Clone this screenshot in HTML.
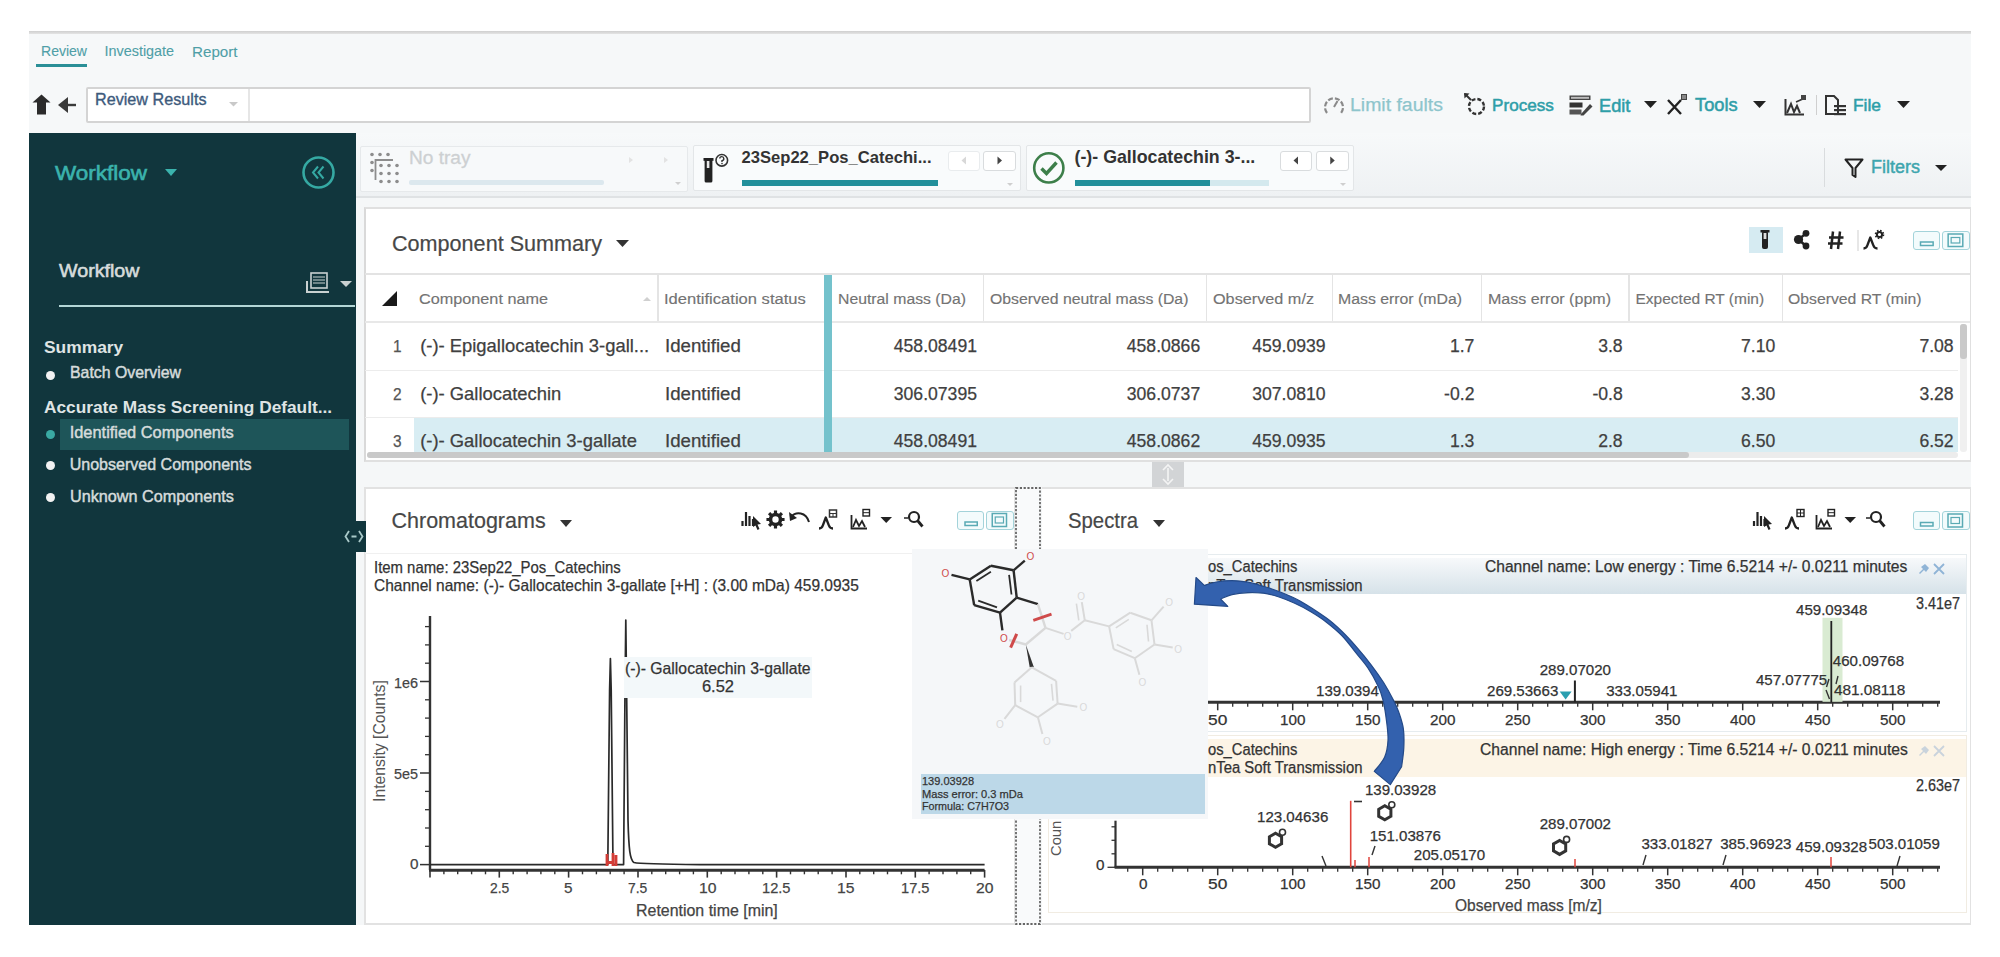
<!DOCTYPE html><html><head><meta charset="utf-8"><style>
html,body{margin:0;padding:0;}
body{width:2000px;height:957px;position:relative;overflow:hidden;background:#fff;font-family:"Liberation Sans",sans-serif;}
.a{position:absolute;box-sizing:border-box;}
.t{position:absolute;white-space:nowrap;line-height:1;transform-origin:0 0;}
svg{position:absolute;overflow:visible;}
</style></head><body>
<div class="a" style="left:29px;top:31px;width:1942px;height:894px;background:#f6f8f9;"></div>
<div class="a" style="left:29px;top:31px;width:1942px;height:3px;background:linear-gradient(#cfcfcf,#e4e4e4);"></div>
<div class="t" style="left:40.5px;top:44.4px;font-size:14.1px;color:#4f9fa7;transform:scaleX(0.9950);-webkit-text-stroke:0.1px #4f9fa7;">Review</div>
<div class="a" style="left:36px;top:64px;width:51px;height:3px;background:#2a8f97;"></div>
<div class="t" style="left:104.5px;top:44.1px;font-size:14.4px;color:#4f9fa7;-webkit-text-stroke:0.1px #4f9fa7;">Investigate</div>
<div class="t" style="left:191.8px;top:43.6px;font-size:15px;color:#4f9fa7;transform:scaleX(1.0107);-webkit-text-stroke:0.1px #4f9fa7;">Report</div>
<svg style="left:30px;top:92px" width="50" height="26" viewBox="0 0 50 26"><path d="M2.5 10.5 L11.5 2.5 L20.5 10.5 L16 10.5 L16 22.5 L7 22.5 L7 10.5 Z" fill="#2b2b2b"/><path d="M28 13 L38 5 L38 21 Z" fill="#3a3a3a"/><rect x="36" y="11.8" width="10" height="2.4" fill="#3a3a3a"/></svg>
<div class="a" style="left:86px;top:87px;width:1225px;height:36px;background:#fff;border:2px solid #d4d4d4;border-radius:2px;"></div>
<div class="a" style="left:248px;top:89px;width:1.5px;height:32px;background:#e6e6e6;"></div>
<div class="t" style="left:95.0px;top:90.9px;font-size:16.3px;color:#3d5a7c;transform:scaleX(0.9936);-webkit-text-stroke:0.35px #3d5a7c;">Review Results</div>
<svg style="left:229px;top:102px" width="10" height="5"><path d="M0 0 L9 0 L4.5 4.5Z" fill="#c9c9c9"/></svg>
<svg style="left:1323px;top:96px" width="22" height="19" viewBox="0 0 22 19"><path d="M4 17 A9 9 0 1 1 18 17" fill="none" stroke="#8a8a8a" stroke-width="2.2" stroke-dasharray="5 2"/><path d="M11 11 L14.5 5" stroke="#8a8a8a" stroke-width="2"/></svg>
<div class="t" style="left:1350.0px;top:96.1px;font-size:18.8px;color:#8ec5cc;transform:scaleX(1.0351);-webkit-text-stroke:0.25px #8ec5cc;">Limit faults</div>
<svg style="left:1463px;top:92px" width="24" height="25" viewBox="0 0 24 25"><circle cx="13.5" cy="14.5" r="7.5" fill="none" stroke="#333" stroke-width="2.4" stroke-dasharray="4 2"/><path d="M2 2 L8 8" stroke="#333" stroke-width="2"/><path d="M1 1 L6.5 1.5 L1.5 6.5Z" fill="#333"/></svg>
<div class="t" style="left:1492.0px;top:98.3px;font-size:16.8px;color:#2e9ea8;transform:scaleX(1.0217);-webkit-text-stroke:0.5px #2e9ea8;">Process</div>
<svg style="left:1569px;top:95px" width="24" height="21" viewBox="0 0 24 21"><rect x="0.5" y="0.5" width="21" height="4.5" fill="#444"/><rect x="2" y="1.8" width="18" height="2" fill="#bbb"/><rect x="0.5" y="7.5" width="13" height="5" fill="#333"/><rect x="0.5" y="14.5" width="12" height="5" fill="#555"/><path d="M12 19 L21 9 L23.5 11.5 L14.5 20.5 L11.5 20.5Z" fill="#444"/></svg>
<div class="t" style="left:1598.6px;top:97.7px;font-size:17.5px;color:#2e9ea8;transform:scaleX(1.0413);-webkit-text-stroke:0.5px #2e9ea8;">Edit</div>
<svg style="left:1644px;top:101px" width="14" height="8"><path d="M0 0 L13 0 L6.5 7Z" fill="#222"/></svg>
<svg style="left:1666px;top:94px" width="22" height="22" viewBox="0 0 22 22"><path d="M2 6 L15 20 M15 6 L2 20" stroke="#222" stroke-width="2.4"/><rect x="15" y="0" width="6" height="6" fill="#444"/><rect x="16" y="1.5" width="4" height="1" fill="#ccc"/><rect x="16" y="3.5" width="4" height="1" fill="#ccc"/></svg>
<div class="t" style="left:1694.8px;top:97.4px;font-size:17.8px;color:#2e9ea8;transform:scaleX(1.0276);-webkit-text-stroke:0.5px #2e9ea8;">Tools</div>
<svg style="left:1753px;top:101px" width="14" height="8"><path d="M0 0 L13 0 L6.5 7Z" fill="#222"/></svg>
<svg style="left:1784px;top:95px" width="24" height="21" viewBox="0 0 24 21"><path d="M1.5 4 L1.5 19.5 L20 19.5" fill="none" stroke="#333" stroke-width="2"/><path d="M3 18 L7 9 L10 17 L13 11 L16 18" fill="none" stroke="#333" stroke-width="2"/><path d="M12 7 L21 3" stroke="#333" stroke-width="1.6"/><rect x="17" y="0" width="5" height="5" fill="#444"/></svg>
<div class="a" style="left:1815.5px;top:95px;width:1.5px;height:20px;background:#cfcfcf;"></div>
<svg style="left:1825px;top:95px" width="22" height="21" viewBox="0 0 22 21"><path d="M1 1 L9 1 L13 5 L13 19 L1 19 Z" fill="none" stroke="#333" stroke-width="2"/><rect x="9" y="10" width="12" height="2.2" fill="#333"/><rect x="9" y="14" width="12" height="2.2" fill="#333"/><rect x="9" y="18" width="12" height="2.2" fill="#333"/></svg>
<div class="t" style="left:1853.0px;top:98.3px;font-size:16.8px;color:#2e9ea8;transform:scaleX(1.0344);-webkit-text-stroke:0.5px #2e9ea8;">File</div>
<svg style="left:1897px;top:101px" width="14" height="8"><path d="M0 0 L13 0 L6.5 7Z" fill="#222"/></svg>
<div class="a" style="left:29px;top:132.5px;width:327px;height:792.5px;background:#11363d;"></div>
<div class="t" style="left:55.0px;top:162.9px;font-size:20.5px;color:#3bb3ad;transform:scaleX(1.0964);-webkit-text-stroke:0.6px #3bb3ad;">Workflow</div>
<svg style="left:165px;top:169px" width="13" height="8"><path d="M0 0 L12 0 L6 7Z" fill="#3bb3ad"/></svg>
<svg style="left:301px;top:155px" width="36" height="36" viewBox="0 0 36 36"><circle cx="17.5" cy="17.5" r="15" fill="none" stroke="#35a9a3" stroke-width="2.6"/><path d="M17 11.5 L12 17.5 L17 23.5 M22.5 11.5 L17.5 17.5 L22.5 23.5" fill="none" stroke="#35a9a3" stroke-width="2"/></svg>
<div class="t" style="left:59.0px;top:262.5px;font-size:17.9px;color:#d6dcdc;transform:scaleX(1.0987);-webkit-text-stroke:0.55px #d6dcdc;">Workflow</div>
<svg style="left:305px;top:271px" width="50" height="26" viewBox="0 0 50 26"><rect x="6" y="2" width="16" height="15" fill="none" stroke="#c9d1d1" stroke-width="1.6"/><path d="M8 6 H20 M8 9 H20 M8 12 H20" stroke="#c9d1d1" stroke-width="1.2"/><path d="M2 10 V21 H24" fill="none" stroke="#c9d1d1" stroke-width="2"/><path d="M35 10 L47 10 L41 16Z" fill="#c9d1d1"/></svg>
<div class="a" style="left:59px;top:305px;width:296px;height:2px;background:#b3d6d6;"></div>
<div class="t" style="left:44.0px;top:338.9px;font-size:17.4px;color:#dfe4e4;font-weight:bold;">Summary</div>
<div class="a" style="left:46px;top:371px;width:9px;height:9px;border-radius:50%;background:#f2f2f2;"></div>
<div class="t" style="left:69.7px;top:364.9px;font-size:15.9px;color:#d6dcdc;transform:scaleX(0.9970);-webkit-text-stroke:0.45px #d6dcdc;">Batch Overview</div>
<div class="t" style="left:44.0px;top:398.7px;font-size:17.3px;color:#dfe4e4;font-weight:bold;">Accurate Mass Screening Default...</div>
<div class="a" style="left:60px;top:419px;width:289px;height:31px;background:#1e5559;"></div>
<div class="a" style="left:46px;top:430px;width:9px;height:9px;border-radius:50%;background:#3aa9a3;"></div>
<div class="t" style="left:69.7px;top:424.1px;font-size:16.4px;color:#d6dcdc;-webkit-text-stroke:0.45px #d6dcdc;">Identified Components</div>
<div class="a" style="left:46px;top:461px;width:9px;height:9px;border-radius:50%;background:#f2f2f2;"></div>
<div class="t" style="left:69.7px;top:455.8px;font-size:16.05px;color:#d6dcdc;-webkit-text-stroke:0.45px #d6dcdc;">Unobserved Components</div>
<div class="a" style="left:46px;top:493px;width:9px;height:9px;border-radius:50%;background:#f2f2f2;"></div>
<div class="t" style="left:69.7px;top:487.7px;font-size:16.4px;color:#d6dcdc;transform:scaleX(0.9885);-webkit-text-stroke:0.45px #d6dcdc;">Unknown Components</div>
<div class="a" style="left:340px;top:521px;width:26px;height:31px;background:#11363d;"></div>
<svg style="left:344px;top:528px" width="20" height="16" viewBox="0 0 20 16"><path d="M5 3 L1.5 8 L5 13 M15 3 L18.5 8 L15 13 M7 8 H13" fill="none" stroke="#9fc4c4" stroke-width="1.8"/></svg>
<div class="a" style="left:356px;top:132.5px;width:1615px;height:64.5px;background:linear-gradient(#f7f9fa,#eef1f3);"></div>
<div class="a" style="left:356px;top:196px;width:1615px;height:2px;background:#dfe2e4;"></div>
<div class="a" style="left:356px;top:198px;width:1615px;height:727px;background:#f5f7f8;"></div>
<div class="a" style="left:360px;top:145.5px;width:327.5px;height:46.0px;background:#f7f9fa;border:1.5px solid #e6e9eb;border-radius:2px;"></div>
<svg style="left:0;top:0" width="1" height="1"><circle cx="372" cy="154.5" r="1.8" fill="#8d8d8d"/><circle cx="380" cy="154.5" r="1.8" fill="#8d8d8d"/><circle cx="388" cy="154.5" r="1.8" fill="#8d8d8d"/><circle cx="372" cy="162.5" r="1.8" fill="#8d8d8d"/><circle cx="372" cy="170.5" r="1.8" fill="#8d8d8d"/><circle cx="381" cy="165.5" r="1.8" fill="#8d8d8d"/><circle cx="389" cy="165.5" r="1.8" fill="#8d8d8d"/><circle cx="397" cy="165.5" r="1.8" fill="#8d8d8d"/><circle cx="381" cy="173.5" r="1.8" fill="#8d8d8d"/><circle cx="389" cy="173.5" r="1.8" fill="#8d8d8d"/><circle cx="397" cy="173.5" r="1.8" fill="#8d8d8d"/><circle cx="381" cy="181.5" r="1.8" fill="#8d8d8d"/><circle cx="389" cy="181.5" r="1.8" fill="#8d8d8d"/><circle cx="397" cy="181.5" r="1.8" fill="#8d8d8d"/><path d="M375.5 180 V160 H393" fill="none" stroke="#8d8d8d" stroke-width="1.8"/></svg>
<div class="t" style="left:409.0px;top:147.7px;font-size:19.2px;color:#cdd0d2;transform:scaleX(0.9938);-webkit-text-stroke:0.3px #cdd0d2;">No tray</div>
<div class="a" style="left:409px;top:180px;width:194.5px;height:5px;background:#dce8ee;border-radius:2px;"></div>
<svg style="left:0;top:0" width="1" height="1"><path d="M629 157 L633 160 L629 163Z M664 157 L668 160 L664 163Z" fill="#e3e3e3"/><path d="M675 182 L681 182 L678 185Z" fill="#cfcfcf"/></svg>
<div class="a" style="left:693px;top:145px;width:327.5px;height:46px;background:#f9fbfc;border:1.5px solid #e3e6e8;border-radius:2px;"></div>
<svg style="left:0;top:0" width="1" height="1"><rect x="703.5" y="158" width="10" height="2.8" fill="#222"/><rect x="704.6" y="159" width="7.8" height="23.6" rx="1.5" fill="#222"/><rect x="706.8" y="161" width="2.6" height="7" fill="#e8e8e8"/><circle cx="721.8" cy="160.3" r="5.8" fill="none" stroke="#333" stroke-width="1.6"/><path d="M719.8 158.6 A2 2 0 1 1 722 160.6 V162" fill="none" stroke="#333" stroke-width="1.4"/><circle cx="722" cy="163.6" r="0.8" fill="#333"/></svg>
<div class="t" style="left:741.5px;top:149.9px;font-size:16.6px;color:#333;font-weight:bold;">23Sep22_Pos_Catechi...</div>
<div class="a" style="left:741.5px;top:180px;width:196.0px;height:5.5px;background:#23909b;"></div>
<div class="a" style="left:948px;top:150.5px;width:32px;height:20.0px;background:#fff;border:1.5px solid #e9ecee;border-radius:3px;"></div>
<svg style="left:0;top:0" width="1" height="1"><path d="M966.0 156.5 L961.5 160.5 L966.0 164.5Z" fill="#d8d8d8"/></svg>
<div class="a" style="left:983px;top:150.5px;width:33px;height:20.0px;background:#fff;border:1.5px solid #d9dcde;border-radius:3px;"></div>
<svg style="left:0;top:0" width="1" height="1"><path d="M997.5 156.5 L1002.0 160.5 L997.5 164.5Z" fill="#444"/></svg>
<svg style="left:0;top:0" width="1" height="1"><path d="M1007 183 L1013 183 L1010 186Z" fill="#cfcfcf"/></svg>
<div class="a" style="left:1026px;top:145px;width:328px;height:46px;background:#f9fbfc;border:1.5px solid #e3e6e8;border-radius:2px;"></div>
<svg style="left:1032px;top:151px" width="34" height="34" viewBox="0 0 34 34"><circle cx="16.8" cy="16.9" r="14.6" fill="none" stroke="#3d7f4a" stroke-width="2.6"/><path d="M9.5 17.5 L14.5 22.5 L24.5 11.5" fill="none" stroke="#3d7f4a" stroke-width="3.4"/></svg>
<div class="t" style="left:1074.5px;top:148.7px;font-size:17.8px;color:#333;font-weight:bold;">(-)- Gallocatechin 3-...</div>
<div class="a" style="left:1074.5px;top:180px;width:194.5px;height:5.5px;background:#d4e9ee;"></div>
<div class="a" style="left:1074.5px;top:180px;width:135.5px;height:5.5px;background:#23909b;"></div>
<div class="a" style="left:1280px;top:150.5px;width:32px;height:20.0px;background:#fff;border:1.5px solid #d9dcde;border-radius:3px;"></div>
<svg style="left:0;top:0" width="1" height="1"><path d="M1298.0 156.5 L1293.5 160.5 L1298.0 164.5Z" fill="#444"/></svg>
<div class="a" style="left:1316px;top:150.5px;width:32.5px;height:20.0px;background:#fff;border:1.5px solid #d9dcde;border-radius:3px;"></div>
<svg style="left:0;top:0" width="1" height="1"><path d="M1330.25 156.5 L1334.75 160.5 L1330.25 164.5Z" fill="#444"/></svg>
<svg style="left:0;top:0" width="1" height="1"><path d="M1340 183 L1346 183 L1343 186Z" fill="#cfcfcf"/></svg>
<div class="a" style="left:1823.5px;top:147.5px;width:1.5px;height:39.5px;background:#d9dcde;"></div>
<svg style="left:1844px;top:158px" width="21" height="21" viewBox="0 0 21 21"><path d="M1.5 1.5 H18.5 L11.5 10 V19 L8.5 17 V10 Z" fill="none" stroke="#222" stroke-width="2" stroke-linejoin="round"/></svg>
<div class="t" style="left:1871.0px;top:158.1px;font-size:18px;color:#3ea5ae;-webkit-text-stroke:0.45px #3ea5ae;">Filters</div>
<svg style="left:1934.5px;top:165px" width="13" height="7"><path d="M0 0 L12 0 L6.0 6Z" fill="#222"/></svg>
<div class="a" style="left:364px;top:207px;width:1607px;height:255px;background:#fff;border:2px solid #e0e0e0;border-left:2.5px solid #d9d9d9;border-right:1px solid #e0e0e0;"></div>
<div class="t" style="left:392.0px;top:232.5px;font-size:21.6px;color:#474747;-webkit-text-stroke:0.2px #474747;">Component Summary</div>
<svg style="left:616px;top:239.5px" width="14" height="8"><path d="M0 0 L13 0 L6.5 7Z" fill="#333"/></svg>
<div class="a" style="left:1749px;top:226.5px;width:34px;height:26.0px;background:#d6ebf2;"></div>
<svg style="left:0;top:0" width="1" height="1"><rect x="1760.5" y="230" width="9" height="2.5" fill="#222"/><rect x="1762" y="231" width="6" height="18" rx="2" fill="#222"/><rect x="1763.6" y="233" width="2.8" height="6" fill="#ddd"/><circle cx="1798.5" cy="239.5" r="4.6" fill="#222"/><circle cx="1806" cy="233.3" r="3.4" fill="#222"/><circle cx="1806" cy="246" r="3.4" fill="#222"/><path d="M1798.5 239.5 L1806 233.3 M1798.5 239.5 L1806 246" stroke="#222" stroke-width="2.4"/><path d="M1833 231.5 L1831 249 M1840 231.5 L1838 249 M1829 237.5 H1843.5 M1828 243.5 H1842.5" stroke="#222" stroke-width="2.5"/><rect x="1857.5" y="230" width="1" height="21" fill="#d0d0d0"/><path d="M1863.5 248.5 Q1866.5 248.5 1867.5 245 L1870.3 237.5 L1873.2 245 Q1874.3 248.5 1877.5 248.5" fill="none" stroke="#222" stroke-width="2.3" stroke-linejoin="round"/><circle cx="1879.5" cy="234.5" r="2.6" fill="none" stroke="#222" stroke-width="2"/><circle cx="1879.5" cy="234.5" r="4" fill="none" stroke="#222" stroke-width="1.6" stroke-dasharray="1.6 1.55"/></svg>
<div class="a" style="left:1912.5px;top:231px;width:27.65000000000009px;height:18.5px;background:#f3fbfc;border:1.5px solid #a3d3da;border-radius:3px;"></div>
<div class="a" style="left:1942.15px;top:231px;width:27.649999999999864px;height:18.5px;background:#f3fbfc;border:1.5px solid #a3d3da;border-radius:3px;"></div>
<svg style="left:0;top:0" width="1" height="1"><rect x="1920.5" y="242.0" width="12.650000000000091" height="3.5" fill="none" stroke="#5aaab4" stroke-width="1.5"/><rect x="1948.15" y="234" width="14.649999999999864" height="12.5" fill="none" stroke="#5aaab4" stroke-width="1.5"/><rect x="1951.15" y="237.5" width="8.649999999999864" height="5.5" fill="none" stroke="#5aaab4" stroke-width="1.2"/></svg>
<div class="a" style="left:365px;top:273px;width:1605px;height:2px;background:#e3e3e3;"></div>
<div class="a" style="left:365px;top:321px;width:1605px;height:2px;background:#e8e8e8;"></div>
<div class="a" style="left:657.0px;top:275px;width:1.5px;height:46px;background:#e4e4e4;"></div>
<div class="a" style="left:982.5px;top:275px;width:1.5px;height:46px;background:#e4e4e4;"></div>
<div class="a" style="left:1205.5px;top:275px;width:1.5px;height:46px;background:#e4e4e4;"></div>
<div class="a" style="left:1331.5px;top:275px;width:1.5px;height:46px;background:#e4e4e4;"></div>
<div class="a" style="left:1480.5px;top:275px;width:1.5px;height:46px;background:#e4e4e4;"></div>
<div class="a" style="left:1628.0px;top:275px;width:1.5px;height:46px;background:#e4e4e4;"></div>
<div class="a" style="left:1781.5px;top:275px;width:1.5px;height:46px;background:#e4e4e4;"></div>
<svg style="left:0;top:0" width="1" height="1"><path d="M382 306 L397 291 L397 306Z" fill="#1a1a1a"/><path d="M643 301 L651 301 L647 297Z" fill="#d0d0d0"/></svg>
<div class="t" style="left:419.2px;top:290.5px;font-size:15.5px;color:#737373;transform:scaleX(1.0471);-webkit-text-stroke:0.15px #737373;">Component name</div>
<div class="t" style="left:664.0px;top:290.5px;font-size:15.5px;color:#737373;transform:scaleX(1.0687);-webkit-text-stroke:0.15px #737373;">Identification status</div>
<div class="t" style="left:837.8px;top:290.5px;font-size:15.5px;color:#737373;transform:scaleX(1.0180);-webkit-text-stroke:0.15px #737373;">Neutral mass (Da)</div>
<div class="t" style="left:989.6px;top:290.5px;font-size:15.5px;color:#737373;transform:scaleX(1.0192);-webkit-text-stroke:0.15px #737373;">Observed neutral mass (Da)</div>
<div class="t" style="left:1212.6px;top:290.5px;font-size:15.5px;color:#737373;transform:scaleX(1.0470);-webkit-text-stroke:0.15px #737373;">Observed m/z</div>
<div class="t" style="left:1338.4px;top:290.5px;font-size:15.5px;color:#737373;transform:scaleX(1.0213);-webkit-text-stroke:0.15px #737373;">Mass error (mDa)</div>
<div class="t" style="left:1487.8px;top:290.5px;font-size:15.5px;color:#737373;transform:scaleX(1.0350);-webkit-text-stroke:0.15px #737373;">Mass error (ppm)</div>
<div class="t" style="left:1635.5px;top:290.5px;font-size:15.5px;color:#737373;-webkit-text-stroke:0.15px #737373;">Expected RT (min)</div>
<div class="t" style="left:1788.4px;top:290.5px;font-size:15.5px;color:#737373;transform:scaleX(1.0175);-webkit-text-stroke:0.15px #737373;">Observed RT (min)</div>
<div class="a" style="left:414px;top:418px;width:1544px;height:33.5px;background:#d8edf3;"></div>
<div class="a" style="left:365px;top:369.5px;width:1593px;height:1.5px;background:#ececec;"></div>
<div class="a" style="left:365px;top:416.5px;width:1593px;height:1.5px;background:#ececec;"></div>
<div class="a" style="left:824px;top:275px;width:8px;height:176.5px;background:#74c2cc;"></div>
<div class="t" style="left:392.7px;top:337.8px;font-size:17.2px;color:#555;transform:scaleX(0.8991);-webkit-text-stroke:0.25px #555;">1</div>
<div class="t" style="left:420.2px;top:336.8px;font-size:18.4px;color:#404040;-webkit-text-stroke:0.25px #404040;">(-)- Epigallocatechin 3-gall...</div>
<div class="t" style="left:665.0px;top:336.6px;font-size:18.7px;color:#404040;-webkit-text-stroke:0.25px #404040;">Identified</div>
<div class="t" style="left:893.8px;top:337.5px;font-size:17.6px;color:#404040;-webkit-text-stroke:0.25px #404040;">458.08491</div>
<div class="t" style="left:1126.8px;top:337.5px;font-size:17.6px;color:#404040;-webkit-text-stroke:0.25px #404040;">458.0866</div>
<div class="t" style="left:1252.2px;top:337.5px;font-size:17.6px;color:#404040;-webkit-text-stroke:0.25px #404040;">459.0939</div>
<div class="t" style="left:1449.9px;top:337.5px;font-size:17.6px;color:#404040;-webkit-text-stroke:0.25px #404040;">1.7</div>
<div class="t" style="left:1598.2px;top:337.5px;font-size:17.6px;color:#404040;-webkit-text-stroke:0.25px #404040;">3.8</div>
<div class="t" style="left:1741.0px;top:337.5px;font-size:17.6px;color:#404040;-webkit-text-stroke:0.25px #404040;">7.10</div>
<div class="t" style="left:1919.4px;top:337.5px;font-size:17.6px;color:#404040;-webkit-text-stroke:0.25px #404040;">7.08</div>
<div class="t" style="left:392.7px;top:385.8px;font-size:17.2px;color:#555;transform:scaleX(0.8991);-webkit-text-stroke:0.25px #555;">2</div>
<div class="t" style="left:420.2px;top:384.8px;font-size:18.4px;color:#404040;-webkit-text-stroke:0.25px #404040;">(-)- Gallocatechin</div>
<div class="t" style="left:665.0px;top:384.6px;font-size:18.7px;color:#404040;-webkit-text-stroke:0.25px #404040;">Identified</div>
<div class="t" style="left:893.8px;top:385.5px;font-size:17.6px;color:#404040;-webkit-text-stroke:0.25px #404040;">306.07395</div>
<div class="t" style="left:1126.8px;top:385.5px;font-size:17.6px;color:#404040;-webkit-text-stroke:0.25px #404040;">306.0737</div>
<div class="t" style="left:1252.2px;top:385.5px;font-size:17.6px;color:#404040;-webkit-text-stroke:0.25px #404040;">307.0810</div>
<div class="t" style="left:1444.1px;top:385.5px;font-size:17.6px;color:#404040;-webkit-text-stroke:0.25px #404040;">-0.2</div>
<div class="t" style="left:1592.4px;top:385.5px;font-size:17.6px;color:#404040;-webkit-text-stroke:0.25px #404040;">-0.8</div>
<div class="t" style="left:1741.0px;top:385.5px;font-size:17.6px;color:#404040;-webkit-text-stroke:0.25px #404040;">3.30</div>
<div class="t" style="left:1919.4px;top:385.5px;font-size:17.6px;color:#404040;-webkit-text-stroke:0.25px #404040;">3.28</div>
<div class="t" style="left:392.7px;top:432.8px;font-size:17.2px;color:#555;transform:scaleX(0.8991);-webkit-text-stroke:0.25px #555;">3</div>
<div class="t" style="left:420.2px;top:431.8px;font-size:18.4px;color:#404040;-webkit-text-stroke:0.25px #404040;">(-)- Gallocatechin 3-gallate</div>
<div class="t" style="left:665.0px;top:431.6px;font-size:18.7px;color:#404040;-webkit-text-stroke:0.25px #404040;">Identified</div>
<div class="t" style="left:893.8px;top:432.5px;font-size:17.6px;color:#404040;-webkit-text-stroke:0.25px #404040;">458.08491</div>
<div class="t" style="left:1126.8px;top:432.5px;font-size:17.6px;color:#404040;-webkit-text-stroke:0.25px #404040;">458.0862</div>
<div class="t" style="left:1252.2px;top:432.5px;font-size:17.6px;color:#404040;-webkit-text-stroke:0.25px #404040;">459.0935</div>
<div class="t" style="left:1449.9px;top:432.5px;font-size:17.6px;color:#404040;-webkit-text-stroke:0.25px #404040;">1.3</div>
<div class="t" style="left:1598.2px;top:432.5px;font-size:17.6px;color:#404040;-webkit-text-stroke:0.25px #404040;">2.8</div>
<div class="t" style="left:1741.0px;top:432.5px;font-size:17.6px;color:#404040;-webkit-text-stroke:0.25px #404040;">6.50</div>
<div class="t" style="left:1919.4px;top:432.5px;font-size:17.6px;color:#404040;-webkit-text-stroke:0.25px #404040;">6.52</div>
<div class="a" style="left:367px;top:451.5px;width:1591px;height:6.5px;background:#ececec;border-radius:3px;"></div>
<div class="a" style="left:367px;top:451.5px;width:1322px;height:6.5px;background:#c9c9c9;border-radius:3px;"></div>
<div class="a" style="left:1960px;top:324px;width:7px;height:128px;background:#f0f0f0;border-radius:3px;"></div>
<div class="a" style="left:1960px;top:324px;width:7px;height:35px;background:#c9c9c9;border-radius:3px;"></div>
<div class="a" style="left:1152px;top:462px;width:32px;height:25px;background:#d2d4d6;"></div>
<svg style="left:0;top:0" width="1" height="1"><path d="M1163 470 L1168 465 L1173 470 M1163 479 L1168 484 L1173 479 M1168 468 V481" fill="none" stroke="#f4f4f4" stroke-width="1.6"/></svg>
<div class="a" style="left:363.5px;top:487px;width:652.5px;height:438px;background:#fff;border:2px solid #e2e2e2;"></div>
<div class="t" style="left:391.5px;top:511.3px;font-size:21.5px;color:#474747;-webkit-text-stroke:0.2px #474747;">Chromatograms</div>
<svg style="left:560px;top:519.5px" width="13" height="8"><path d="M0 0 L12 0 L6.0 7Z" fill="#333"/></svg>
<svg style="left:0;top:0" width="1" height="1"><path d="M742.5 521 V526 M746 512 V526 M749.5 516 V526 M753 519 V526" stroke="#222" stroke-width="2.2"/><path d="M753 516 L761 524 L757.5 524.5 L759.5 529 L757.5 530 L755.5 525.5 L753 527Z" fill="#222"/><path d="M784.56 517.92 L784.56 521.08 L782.11 521.09 L781.30 523.05 L783.03 524.79 L780.79 527.03 L779.05 525.30 L777.09 526.11 L777.08 528.56 L773.92 528.56 L773.91 526.11 L771.95 525.30 L770.21 527.03 L767.97 524.79 L769.70 523.05 L768.89 521.09 L766.44 521.08 L766.44 517.92 L768.89 517.91 L769.70 515.95 L767.97 514.21 L770.21 511.97 L771.95 513.70 L773.91 512.89 L773.92 510.44 L777.08 510.44 L777.09 512.89 L779.05 513.70 L780.79 511.97 L783.03 514.21 L781.30 515.95 L782.11 517.91Z M778.7 519.5 A3.2 3.2 0 1 0 772.3 519.5 A3.2 3.2 0 1 0 778.7 519.5Z" fill="#222" fill-rule="evenodd"/><path d="M791 517 C796 511 806 512 809 522" fill="none" stroke="#222" stroke-width="2"/><path d="M789 512 L790 521 L797 518Z" fill="#222"/><path d="M819 528.5 Q822 528.5 823 525 L825.8 517.5 L828.7 525 Q829.8 528.5 833 528.5" fill="none" stroke="#222" stroke-width="2.3" stroke-linejoin="round"/><rect x="829.5" y="510" width="7" height="7" fill="none" stroke="#333" stroke-width="1.5"/><path d="M829.5 513.5 H836.5 M833 513.5 V517" stroke="#333" stroke-width="1"/><path d="M851.5 515 V528.5 H867" fill="none" stroke="#222" stroke-width="1.8"/><path d="M853 527 L856 520 L859 526 L862 521 L865 527" fill="none" stroke="#222" stroke-width="1.8"/><rect x="863" y="509.5" width="6.5" height="6.5" fill="none" stroke="#222" stroke-width="1.4"/><path d="M863 512.7 H869.5" stroke="#222" stroke-width="1"/><path d="M880.5 517 L892 517 L886.2 523Z" fill="#222"/><circle cx="914" cy="517" r="5" fill="none" stroke="#222" stroke-width="2.2"/><path d="M917.5 520.5 L922.5 526.5" stroke="#222" stroke-width="2.8"/><path d="M904 518 L908 518" stroke="#222" stroke-width="1.5"/></svg>
<div class="a" style="left:957px;top:510.5px;width:27.25px;height:19.0px;background:#f3fbfc;border:1.5px solid #a3d3da;border-radius:3px;"></div>
<div class="a" style="left:986.25px;top:510.5px;width:27.25px;height:19.0px;background:#f3fbfc;border:1.5px solid #a3d3da;border-radius:3px;"></div>
<svg style="left:0;top:0" width="1" height="1"><rect x="965" y="522.0" width="12.25" height="3.5" fill="none" stroke="#5aaab4" stroke-width="1.5"/><rect x="992.25" y="513.5" width="14.25" height="13.0" fill="none" stroke="#5aaab4" stroke-width="1.5"/><rect x="995.25" y="517.0" width="8.25" height="6.0" fill="none" stroke="#5aaab4" stroke-width="1.2"/></svg>
<div class="a" style="left:365px;top:553px;width:650px;height:1px;background:#f0f0f0;"></div>
<div class="t" style="left:374.0px;top:558.9px;font-size:16.5px;color:#333;transform:scaleX(0.9030);-webkit-text-stroke:0.25px #333;">Item name: 23Sep22_Pos_Catechins</div>
<div class="t" style="left:374.0px;top:577.3px;font-size:16.5px;color:#333;transform:scaleX(0.9398);-webkit-text-stroke:0.25px #333;">Channel name: (-)- Gallocatechin 3-gallate [+H] : (3.00 mDa) 459.0935</div>
<svg style="left:0;top:0" width="1" height="1"><path d="M430 616 V870" stroke="#333" stroke-width="2.4"/><path d="M429 870.3 H984.6" stroke="#333" stroke-width="3"/><path d="M420 864.6 H430" stroke="#333" stroke-width="1.5"/><path d="M425 846.3 H430" stroke="#333" stroke-width="1.3"/><path d="M425 828.0 H430" stroke="#333" stroke-width="1.3"/><path d="M425 809.7 H430" stroke="#333" stroke-width="1.3"/><path d="M425 791.4 H430" stroke="#333" stroke-width="1.3"/><path d="M420 773.0 H430" stroke="#333" stroke-width="1.5"/><path d="M425 754.7 H430" stroke="#333" stroke-width="1.3"/><path d="M425 736.4 H430" stroke="#333" stroke-width="1.3"/><path d="M425 718.1 H430" stroke="#333" stroke-width="1.3"/><path d="M425 699.8 H430" stroke="#333" stroke-width="1.3"/><path d="M420 681.5 H430" stroke="#333" stroke-width="1.5"/><path d="M425 663.2 H430" stroke="#333" stroke-width="1.3"/><path d="M425 644.9 H430" stroke="#333" stroke-width="1.3"/><path d="M425 626.6 H430" stroke="#333" stroke-width="1.3"/><path d="M430.0 870 V877.6" stroke="#333" stroke-width="1.6"/><path d="M443.9 870 V874.3" stroke="#333" stroke-width="1.4"/><path d="M457.7 870 V874.3" stroke="#333" stroke-width="1.4"/><path d="M471.6 870 V874.3" stroke="#333" stroke-width="1.4"/><path d="M485.5 870 V874.3" stroke="#333" stroke-width="1.4"/><path d="M499.3 870 V877.6" stroke="#333" stroke-width="1.6"/><path d="M513.2 870 V874.3" stroke="#333" stroke-width="1.4"/><path d="M527.1 870 V874.3" stroke="#333" stroke-width="1.4"/><path d="M540.9 870 V874.3" stroke="#333" stroke-width="1.4"/><path d="M554.8 870 V874.3" stroke="#333" stroke-width="1.4"/><path d="M568.6 870 V877.6" stroke="#333" stroke-width="1.6"/><path d="M582.5 870 V874.3" stroke="#333" stroke-width="1.4"/><path d="M596.4 870 V874.3" stroke="#333" stroke-width="1.4"/><path d="M610.2 870 V874.3" stroke="#333" stroke-width="1.4"/><path d="M624.1 870 V874.3" stroke="#333" stroke-width="1.4"/><path d="M638.0 870 V877.6" stroke="#333" stroke-width="1.6"/><path d="M651.8 870 V874.3" stroke="#333" stroke-width="1.4"/><path d="M665.7 870 V874.3" stroke="#333" stroke-width="1.4"/><path d="M679.6 870 V874.3" stroke="#333" stroke-width="1.4"/><path d="M693.4 870 V874.3" stroke="#333" stroke-width="1.4"/><path d="M707.3 870 V877.6" stroke="#333" stroke-width="1.6"/><path d="M721.2 870 V874.3" stroke="#333" stroke-width="1.4"/><path d="M735.0 870 V874.3" stroke="#333" stroke-width="1.4"/><path d="M748.9 870 V874.3" stroke="#333" stroke-width="1.4"/><path d="M762.8 870 V874.3" stroke="#333" stroke-width="1.4"/><path d="M776.6 870 V877.6" stroke="#333" stroke-width="1.6"/><path d="M790.5 870 V874.3" stroke="#333" stroke-width="1.4"/><path d="M804.4 870 V874.3" stroke="#333" stroke-width="1.4"/><path d="M818.2 870 V874.3" stroke="#333" stroke-width="1.4"/><path d="M832.1 870 V874.3" stroke="#333" stroke-width="1.4"/><path d="M846.0 870 V877.6" stroke="#333" stroke-width="1.6"/><path d="M859.8 870 V874.3" stroke="#333" stroke-width="1.4"/><path d="M873.7 870 V874.3" stroke="#333" stroke-width="1.4"/><path d="M887.5 870 V874.3" stroke="#333" stroke-width="1.4"/><path d="M901.4 870 V874.3" stroke="#333" stroke-width="1.4"/><path d="M915.3 870 V877.6" stroke="#333" stroke-width="1.6"/><path d="M929.1 870 V874.3" stroke="#333" stroke-width="1.4"/><path d="M943.0 870 V874.3" stroke="#333" stroke-width="1.4"/><path d="M956.9 870 V874.3" stroke="#333" stroke-width="1.4"/><path d="M970.7 870 V874.3" stroke="#333" stroke-width="1.4"/><path d="M984.6 870 V877.6" stroke="#333" stroke-width="1.6"/><path d="M430 864.6 H607.8 L609.6 690 L610.4 658.5 L611.2 690 L613 864.6 H623.6 L625 690 L625.8 620 L626.6 690 L628 820 C628.8 850 630 860 634 862.5 C640 864 660 864.3 700 864.6 H984.6" fill="none" stroke="#2a2a2a" stroke-width="1.7" stroke-linejoin="round"/><path d="M607 854 V866 M613 853 V866 M607 862.5 H613 M616 855 V866" stroke="#d23c36" stroke-width="2.8"/></svg>
<div class="t" style="left:394.0px;top:674.6px;font-size:15.4px;color:#444;transform:scaleX(0.9342);-webkit-text-stroke:0.25px #444;">1e6</div>
<div class="t" style="left:394.0px;top:766.0px;font-size:15.4px;color:#444;transform:scaleX(0.9342);-webkit-text-stroke:0.25px #444;">5e5</div>
<div class="t" style="left:409.5px;top:855.7px;font-size:15.4px;color:#444;transform:scaleX(0.9925);-webkit-text-stroke:0.25px #444;">0</div>
<div class="t" style="left:489.7px;top:879.7px;font-size:15.4px;color:#444;transform:scaleX(0.9016);-webkit-text-stroke:0.25px #444;">2.5</div>
<div class="t" style="left:564.4px;top:879.7px;font-size:15.4px;color:#444;transform:scaleX(0.9925);-webkit-text-stroke:0.25px #444;">5</div>
<div class="t" style="left:628.3px;top:879.7px;font-size:15.4px;color:#444;transform:scaleX(0.9016);-webkit-text-stroke:0.25px #444;">7.5</div>
<div class="t" style="left:698.5px;top:879.7px;font-size:15.4px;color:#444;transform:scaleX(1.0217);-webkit-text-stroke:0.25px #444;">10</div>
<div class="t" style="left:762.4px;top:879.7px;font-size:15.4px;color:#444;transform:scaleX(0.9510);-webkit-text-stroke:0.25px #444;">12.5</div>
<div class="t" style="left:837.2px;top:879.7px;font-size:15.4px;color:#444;transform:scaleX(1.0217);-webkit-text-stroke:0.25px #444;">15</div>
<div class="t" style="left:901.0px;top:879.7px;font-size:15.4px;color:#444;transform:scaleX(0.9510);-webkit-text-stroke:0.25px #444;">17.5</div>
<div class="t" style="left:975.9px;top:879.7px;font-size:15.4px;color:#444;transform:scaleX(1.0217);-webkit-text-stroke:0.25px #444;">20</div>
<div class="t" style="left:636.4px;top:903.1px;font-size:15.6px;color:#444;transform:scaleX(1.0222);-webkit-text-stroke:0.25px #444;">Retention time [min]</div>
<div class="t" style="left:372px;top:802px;font-size:16px;color:#555;transform:rotate(-90deg) scaleX(0.985);transform-origin:0 0;">Intensity [Counts]</div>
<div class="a" style="left:624px;top:657px;width:188px;height:41px;background:#f3f8fa;"></div>
<div class="t" style="left:625.3px;top:659.7px;font-size:16.5px;color:#333;transform:scaleX(0.9547);-webkit-text-stroke:0.25px #333;">(-)- Gallocatechin 3-gallate</div>
<div class="t" style="left:701.9px;top:678.1px;font-size:16.5px;color:#333;-webkit-text-stroke:0.25px #333;">6.52</div>
<div class="a" style="left:1042px;top:487px;width:929px;height:438px;background:#fff;border-top:2px solid #e2e2e2;border-bottom:2px solid #e2e2e2;border-right:1.5px solid #e2e2e2;"></div>
<div class="a" style="left:1015px;top:487px;width:26px;height:438px;background:#f9fafb;"></div>
<svg style="left:0;top:0" width="1" height="1"><rect x="1016" y="488" width="24" height="436" fill="none" stroke="#666" stroke-width="1.8" stroke-dasharray="2.2 1.6"/></svg>
<div class="t" style="left:1068.0px;top:510.8px;font-size:21.5px;color:#474747;transform:scaleX(0.9448);-webkit-text-stroke:0.2px #474747;">Spectra</div>
<svg style="left:1152.5px;top:519.5px" width="13" height="8"><path d="M0 0 L12 0 L6.0 7Z" fill="#333"/></svg>
<svg style="left:0;top:0" width="1" height="1"><path d="M1754 521 V526 M1757.5 512 V526 M1761 516 V526 M1764.5 519 V526" stroke="#222" stroke-width="2.2"/><path d="M1764 516 L1772 524 L1768.5 524.5 L1770.5 529 L1768.5 530 L1766.5 525.5 L1764 527Z" fill="#222"/><path d="M1785 528.5 Q1788 528.5 1789 525 L1791.8 517.5 L1794.7 525 Q1795.8 528.5 1799 528.5" fill="none" stroke="#222" stroke-width="2.3" stroke-linejoin="round"/><rect x="1797" y="509.5" width="7" height="7" fill="none" stroke="#222" stroke-width="1.4"/><path d="M1797 513 H1804 M1800.5 509.5 V516.5" stroke="#222" stroke-width="1"/><path d="M1816.5 515 V528.5 H1832" fill="none" stroke="#222" stroke-width="1.8"/><path d="M1818 527 L1821 520 L1824 526 L1827 521 L1830 527" fill="none" stroke="#222" stroke-width="1.8"/><rect x="1828" y="509.5" width="6.5" height="6.5" fill="none" stroke="#222" stroke-width="1.4"/><path d="M1828 512.7 H1834.5" stroke="#222" stroke-width="1"/><path d="M1844.5 517 L1856 517 L1850.2 523Z" fill="#222"/><circle cx="1876" cy="517" r="5" fill="none" stroke="#222" stroke-width="2.2"/><path d="M1879.5 520.5 L1884.5 526.5" stroke="#222" stroke-width="2.8"/><path d="M1866 518 L1870 518" stroke="#222" stroke-width="1.5"/></svg>
<div class="a" style="left:1912.5px;top:511px;width:27.5px;height:19px;background:#f3fbfc;border:1.5px solid #a3d3da;border-radius:3px;"></div>
<div class="a" style="left:1942.0px;top:511px;width:27.5px;height:19px;background:#f3fbfc;border:1.5px solid #a3d3da;border-radius:3px;"></div>
<svg style="left:0;top:0" width="1" height="1"><rect x="1920.5" y="522.5" width="12.5" height="3.5" fill="none" stroke="#5aaab4" stroke-width="1.5"/><rect x="1948.0" y="514" width="14.5" height="13" fill="none" stroke="#5aaab4" stroke-width="1.5"/><rect x="1951.0" y="517.5" width="8.5" height="6" fill="none" stroke="#5aaab4" stroke-width="1.2"/></svg>
<div class="a" style="left:1048px;top:553.5px;width:919px;height:178.5px;border:1px solid #e6ecef;"></div>
<div class="a" style="left:1043px;top:558.3px;width:923px;height:35.700000000000045px;background:linear-gradient(#f7f9fb,#d6e2e9);"></div>
<div class="t" style="left:1208.0px;top:559.0px;font-size:15.6px;color:#333;transform:scaleX(0.9469);-webkit-text-stroke:0.25px #333;">os_Catechins</div>
<div class="t" style="left:1208.0px;top:578.0px;font-size:15.6px;color:#333;transform:scaleX(0.9529);-webkit-text-stroke:0.25px #333;">nTea Soft Transmission</div>
<div class="t" style="left:1485.0px;top:559.0px;font-size:15.6px;color:#333;-webkit-text-stroke:0.25px #333;">Channel name: Low energy : Time 6.5214 +/- 0.0211 minutes</div>
<svg style="left:0;top:0" width="1" height="1"><path d="M1919 573 L1923 569 L1921 567 L1925 564 L1929 568 L1926 572 L1924 570 L1920 574Z" fill="#8fb4d6"/><path d="M1934 564 L1944 574 M1944 564 L1934 574" stroke="#8fb4d6" stroke-width="1.8"/></svg>
<div class="t" style="left:1915.7px;top:595.5px;font-size:15.64px;color:#333;transform:scaleX(0.9199);-webkit-text-stroke:0.25px #333;">3.41e7</div>
<svg style="left:0;top:0" width="1" height="1"><path d="M1205 702.3 H1940" stroke="#333" stroke-width="3"/><path d="M1217.7 702.3 V710.3" stroke="#333" stroke-width="1.5"/><path d="M1232.7 702.3 V706.8" stroke="#333" stroke-width="1.3"/><path d="M1247.7 702.3 V706.8" stroke="#333" stroke-width="1.3"/><path d="M1262.7 702.3 V706.8" stroke="#333" stroke-width="1.3"/><path d="M1277.7 702.3 V706.8" stroke="#333" stroke-width="1.3"/><path d="M1292.7 702.3 V710.3" stroke="#333" stroke-width="1.5"/><path d="M1307.7 702.3 V706.8" stroke="#333" stroke-width="1.3"/><path d="M1322.7 702.3 V706.8" stroke="#333" stroke-width="1.3"/><path d="M1337.7 702.3 V706.8" stroke="#333" stroke-width="1.3"/><path d="M1352.7 702.3 V706.8" stroke="#333" stroke-width="1.3"/><path d="M1367.7 702.3 V710.3" stroke="#333" stroke-width="1.5"/><path d="M1382.7 702.3 V706.8" stroke="#333" stroke-width="1.3"/><path d="M1397.7 702.3 V706.8" stroke="#333" stroke-width="1.3"/><path d="M1412.7 702.3 V706.8" stroke="#333" stroke-width="1.3"/><path d="M1427.7 702.3 V706.8" stroke="#333" stroke-width="1.3"/><path d="M1442.7 702.3 V710.3" stroke="#333" stroke-width="1.5"/><path d="M1457.7 702.3 V706.8" stroke="#333" stroke-width="1.3"/><path d="M1472.7 702.3 V706.8" stroke="#333" stroke-width="1.3"/><path d="M1487.7 702.3 V706.8" stroke="#333" stroke-width="1.3"/><path d="M1502.7 702.3 V706.8" stroke="#333" stroke-width="1.3"/><path d="M1517.7 702.3 V710.3" stroke="#333" stroke-width="1.5"/><path d="M1532.7 702.3 V706.8" stroke="#333" stroke-width="1.3"/><path d="M1547.7 702.3 V706.8" stroke="#333" stroke-width="1.3"/><path d="M1562.7 702.3 V706.8" stroke="#333" stroke-width="1.3"/><path d="M1577.7 702.3 V706.8" stroke="#333" stroke-width="1.3"/><path d="M1592.7 702.3 V710.3" stroke="#333" stroke-width="1.5"/><path d="M1607.7 702.3 V706.8" stroke="#333" stroke-width="1.3"/><path d="M1622.7 702.3 V706.8" stroke="#333" stroke-width="1.3"/><path d="M1637.7 702.3 V706.8" stroke="#333" stroke-width="1.3"/><path d="M1652.7 702.3 V706.8" stroke="#333" stroke-width="1.3"/><path d="M1667.7 702.3 V710.3" stroke="#333" stroke-width="1.5"/><path d="M1682.7 702.3 V706.8" stroke="#333" stroke-width="1.3"/><path d="M1697.7 702.3 V706.8" stroke="#333" stroke-width="1.3"/><path d="M1712.7 702.3 V706.8" stroke="#333" stroke-width="1.3"/><path d="M1727.7 702.3 V706.8" stroke="#333" stroke-width="1.3"/><path d="M1742.7 702.3 V710.3" stroke="#333" stroke-width="1.5"/><path d="M1757.7 702.3 V706.8" stroke="#333" stroke-width="1.3"/><path d="M1772.7 702.3 V706.8" stroke="#333" stroke-width="1.3"/><path d="M1787.7 702.3 V706.8" stroke="#333" stroke-width="1.3"/><path d="M1802.7 702.3 V706.8" stroke="#333" stroke-width="1.3"/><path d="M1817.7 702.3 V710.3" stroke="#333" stroke-width="1.5"/><path d="M1832.7 702.3 V706.8" stroke="#333" stroke-width="1.3"/><path d="M1847.7 702.3 V706.8" stroke="#333" stroke-width="1.3"/><path d="M1862.7 702.3 V706.8" stroke="#333" stroke-width="1.3"/><path d="M1877.7 702.3 V706.8" stroke="#333" stroke-width="1.3"/><path d="M1892.7 702.3 V710.3" stroke="#333" stroke-width="1.5"/><path d="M1907.7 702.3 V706.8" stroke="#333" stroke-width="1.3"/><path d="M1922.7 702.3 V706.8" stroke="#333" stroke-width="1.3"/><path d="M1937.7 702.3 V706.8" stroke="#333" stroke-width="1.3"/><rect x="1822.5" y="617.8" width="20" height="84" fill="#d9ebd2"/><path d="M1831.3 621 V702.3" stroke="#222" stroke-width="1.8"/><path d="M1574.9 680.5 V702.3" stroke="#222" stroke-width="2"/><path d="M1559.7 691.4 L1571.6 691.4 L1565.6 699.5Z" fill="#2a9fb0"/><path d="M1829 679 L1826.5 687 M1826 690 L1829.5 699 M1836 684 L1838 676" stroke="#333" stroke-width="1.4"/></svg>
<div class="t" style="left:1208.0px;top:711.7px;font-size:15.36px;color:#333;transform:scaleX(1.1298);-webkit-text-stroke:0.25px #333;">50</div>
<div class="t" style="left:1280.0px;top:711.7px;font-size:15.36px;color:#333;transform:scaleX(0.9951);-webkit-text-stroke:0.25px #333;">100</div>
<div class="t" style="left:1355.0px;top:711.7px;font-size:15.36px;color:#333;transform:scaleX(0.9951);-webkit-text-stroke:0.25px #333;">150</div>
<div class="t" style="left:1430.0px;top:711.7px;font-size:15.36px;color:#333;transform:scaleX(0.9951);-webkit-text-stroke:0.25px #333;">200</div>
<div class="t" style="left:1505.0px;top:711.7px;font-size:15.36px;color:#333;transform:scaleX(0.9951);-webkit-text-stroke:0.25px #333;">250</div>
<div class="t" style="left:1580.0px;top:711.7px;font-size:15.36px;color:#333;transform:scaleX(0.9951);-webkit-text-stroke:0.25px #333;">300</div>
<div class="t" style="left:1655.0px;top:711.7px;font-size:15.36px;color:#333;transform:scaleX(0.9951);-webkit-text-stroke:0.25px #333;">350</div>
<div class="t" style="left:1730.0px;top:711.7px;font-size:15.36px;color:#333;transform:scaleX(0.9951);-webkit-text-stroke:0.25px #333;">400</div>
<div class="t" style="left:1805.0px;top:711.7px;font-size:15.36px;color:#333;transform:scaleX(0.9951);-webkit-text-stroke:0.25px #333;">450</div>
<div class="t" style="left:1880.0px;top:711.7px;font-size:15.36px;color:#333;transform:scaleX(0.9951);-webkit-text-stroke:0.25px #333;">500</div>
<div class="t" style="left:1796.0px;top:602.2px;font-size:15.08px;color:#333;-webkit-text-stroke:0.25px #333;">459.09348</div>
<div class="t" style="left:1832.8px;top:652.5px;font-size:15.08px;color:#333;-webkit-text-stroke:0.25px #333;">460.09768</div>
<div class="t" style="left:1755.9px;top:671.5px;font-size:15.08px;color:#333;-webkit-text-stroke:0.25px #333;">457.07775</div>
<div class="t" style="left:1833.8px;top:681.9px;font-size:15.08px;color:#333;transform:scaleX(1.0163);-webkit-text-stroke:0.25px #333;">481.08118</div>
<div class="t" style="left:1539.7px;top:662.0px;font-size:15.08px;color:#333;-webkit-text-stroke:0.25px #333;">289.07020</div>
<div class="t" style="left:1487.0px;top:683.2px;font-size:15.08px;color:#333;-webkit-text-stroke:0.25px #333;">269.53663</div>
<div class="t" style="left:1606.2px;top:683.2px;font-size:15.08px;color:#333;-webkit-text-stroke:0.25px #333;">333.05941</div>
<div class="t" style="left:1316.0px;top:683.2px;font-size:15.08px;color:#333;-webkit-text-stroke:0.25px #333;">139.0394</div>
<div class="a" style="left:1048px;top:735px;width:919px;height:178px;border:1px solid #f1ece2;"></div>
<div class="a" style="left:1043px;top:739px;width:923px;height:38px;background:#fcf4e6;"></div>
<div class="t" style="left:1208.0px;top:741.7px;font-size:15.6px;color:#333;transform:scaleX(0.9469);-webkit-text-stroke:0.25px #333;">os_Catechins</div>
<div class="t" style="left:1208.0px;top:759.7px;font-size:15.6px;color:#333;transform:scaleX(0.9529);-webkit-text-stroke:0.25px #333;">nTea Soft Transmission</div>
<div class="t" style="left:1480.0px;top:741.7px;font-size:15.6px;color:#333;transform:scaleX(1.0049);-webkit-text-stroke:0.25px #333;">Channel name: High energy : Time 6.5214 +/- 0.0211 minutes</div>
<svg style="left:0;top:0" width="1" height="1"><path d="M1919 755 L1923 751 L1921 749 L1925 746 L1929 750 L1926 754 L1924 752 L1920 756Z" fill="#c9d3dc"/><path d="M1934 746 L1944 756 M1944 746 L1934 756" stroke="#c9d3dc" stroke-width="1.8"/></svg>
<div class="t" style="left:1915.7px;top:778.1px;font-size:15.64px;color:#333;transform:scaleX(0.9199);-webkit-text-stroke:0.25px #333;">2.63e7</div>
<svg style="left:0;top:0" width="1" height="1"><path d="M1114.6 867.3 H1940" stroke="#333" stroke-width="3"/><path d="M1115.5 820.7 V867.3" stroke="#333" stroke-width="2.2"/><path d="M1107.5 867.3 H1115.5" stroke="#333" stroke-width="1.3"/><path d="M1111.5 853.8 H1115.5" stroke="#333" stroke-width="1.3"/><path d="M1111.5 840.3 H1115.5" stroke="#333" stroke-width="1.3"/><path d="M1111.5 826.8 H1115.5" stroke="#333" stroke-width="1.3"/><path d="M1127.7 867.3 V871.8" stroke="#333" stroke-width="1.3"/><path d="M1142.7 867.3 V875.3" stroke="#333" stroke-width="1.5"/><path d="M1157.7 867.3 V871.8" stroke="#333" stroke-width="1.3"/><path d="M1172.7 867.3 V871.8" stroke="#333" stroke-width="1.3"/><path d="M1187.7 867.3 V871.8" stroke="#333" stroke-width="1.3"/><path d="M1202.7 867.3 V871.8" stroke="#333" stroke-width="1.3"/><path d="M1217.7 867.3 V875.3" stroke="#333" stroke-width="1.5"/><path d="M1232.7 867.3 V871.8" stroke="#333" stroke-width="1.3"/><path d="M1247.7 867.3 V871.8" stroke="#333" stroke-width="1.3"/><path d="M1262.7 867.3 V871.8" stroke="#333" stroke-width="1.3"/><path d="M1277.7 867.3 V871.8" stroke="#333" stroke-width="1.3"/><path d="M1292.7 867.3 V875.3" stroke="#333" stroke-width="1.5"/><path d="M1307.7 867.3 V871.8" stroke="#333" stroke-width="1.3"/><path d="M1322.7 867.3 V871.8" stroke="#333" stroke-width="1.3"/><path d="M1337.7 867.3 V871.8" stroke="#333" stroke-width="1.3"/><path d="M1352.7 867.3 V871.8" stroke="#333" stroke-width="1.3"/><path d="M1367.7 867.3 V875.3" stroke="#333" stroke-width="1.5"/><path d="M1382.7 867.3 V871.8" stroke="#333" stroke-width="1.3"/><path d="M1397.7 867.3 V871.8" stroke="#333" stroke-width="1.3"/><path d="M1412.7 867.3 V871.8" stroke="#333" stroke-width="1.3"/><path d="M1427.7 867.3 V871.8" stroke="#333" stroke-width="1.3"/><path d="M1442.7 867.3 V875.3" stroke="#333" stroke-width="1.5"/><path d="M1457.7 867.3 V871.8" stroke="#333" stroke-width="1.3"/><path d="M1472.7 867.3 V871.8" stroke="#333" stroke-width="1.3"/><path d="M1487.7 867.3 V871.8" stroke="#333" stroke-width="1.3"/><path d="M1502.7 867.3 V871.8" stroke="#333" stroke-width="1.3"/><path d="M1517.7 867.3 V875.3" stroke="#333" stroke-width="1.5"/><path d="M1532.7 867.3 V871.8" stroke="#333" stroke-width="1.3"/><path d="M1547.7 867.3 V871.8" stroke="#333" stroke-width="1.3"/><path d="M1562.7 867.3 V871.8" stroke="#333" stroke-width="1.3"/><path d="M1577.7 867.3 V871.8" stroke="#333" stroke-width="1.3"/><path d="M1592.7 867.3 V875.3" stroke="#333" stroke-width="1.5"/><path d="M1607.7 867.3 V871.8" stroke="#333" stroke-width="1.3"/><path d="M1622.7 867.3 V871.8" stroke="#333" stroke-width="1.3"/><path d="M1637.7 867.3 V871.8" stroke="#333" stroke-width="1.3"/><path d="M1652.7 867.3 V871.8" stroke="#333" stroke-width="1.3"/><path d="M1667.7 867.3 V875.3" stroke="#333" stroke-width="1.5"/><path d="M1682.7 867.3 V871.8" stroke="#333" stroke-width="1.3"/><path d="M1697.7 867.3 V871.8" stroke="#333" stroke-width="1.3"/><path d="M1712.7 867.3 V871.8" stroke="#333" stroke-width="1.3"/><path d="M1727.7 867.3 V871.8" stroke="#333" stroke-width="1.3"/><path d="M1742.7 867.3 V875.3" stroke="#333" stroke-width="1.5"/><path d="M1757.7 867.3 V871.8" stroke="#333" stroke-width="1.3"/><path d="M1772.7 867.3 V871.8" stroke="#333" stroke-width="1.3"/><path d="M1787.7 867.3 V871.8" stroke="#333" stroke-width="1.3"/><path d="M1802.7 867.3 V871.8" stroke="#333" stroke-width="1.3"/><path d="M1817.7 867.3 V875.3" stroke="#333" stroke-width="1.5"/><path d="M1832.7 867.3 V871.8" stroke="#333" stroke-width="1.3"/><path d="M1847.7 867.3 V871.8" stroke="#333" stroke-width="1.3"/><path d="M1862.7 867.3 V871.8" stroke="#333" stroke-width="1.3"/><path d="M1877.7 867.3 V871.8" stroke="#333" stroke-width="1.3"/><path d="M1892.7 867.3 V875.3" stroke="#333" stroke-width="1.5"/><path d="M1907.7 867.3 V871.8" stroke="#333" stroke-width="1.3"/><path d="M1922.7 867.3 V871.8" stroke="#333" stroke-width="1.3"/><path d="M1937.7 867.3 V871.8" stroke="#333" stroke-width="1.3"/><path d="M1350.7 800.8 V867.3" stroke="#e0443c" stroke-width="1.6"/><path d="M1354 801.5 H1362" stroke="#333" stroke-width="1.6"/><path d="M1369 857 V867.3" stroke="#e0443c" stroke-width="1.5"/><path d="M1575 859 V867.3" stroke="#e0443c" stroke-width="1.5"/><path d="M1831 857 V867.3" stroke="#e0443c" stroke-width="1.5"/><path d="M1355 860 V867.3" stroke="#e0443c" stroke-width="1.5"/><path d="M1322 856 L1326 866" stroke="#333" stroke-width="1.4"/><path d="M1372 855 L1375 846" stroke="#333" stroke-width="1.4"/><path d="M1643 865 L1646 855" stroke="#333" stroke-width="1.4"/><path d="M1723 865 L1726 855" stroke="#333" stroke-width="1.4"/><path d="M1897 866 L1900 856" stroke="#333" stroke-width="1.4"/><polygon points="1390.9,816.3 1384.8,819.8 1378.7,816.3 1378.7,809.3 1384.8,805.8 1390.9,809.3" fill="none" stroke="#333" stroke-width="3"/><circle cx="1391.8" cy="804.8" r="3" fill="none" stroke="#333" stroke-width="1.6"/><polygon points="1281.6,843.8 1275.5,847.3 1269.4,843.8 1269.4,836.8 1275.5,833.3 1281.6,836.8" fill="none" stroke="#333" stroke-width="3"/><circle cx="1282.5" cy="832.3" r="3" fill="none" stroke="#333" stroke-width="1.6"/><polygon points="1565.7,850.9 1559.6,854.4 1553.5,850.9 1553.5,843.9 1559.6,840.4 1565.7,843.9" fill="none" stroke="#333" stroke-width="3"/><circle cx="1566.6" cy="839.4" r="3" fill="none" stroke="#333" stroke-width="1.6"/></svg>
<div class="t" style="left:1138.5px;top:875.6px;font-size:15.36px;color:#333;transform:scaleX(0.9951);-webkit-text-stroke:0.25px #333;">0</div>
<div class="t" style="left:1208.0px;top:875.6px;font-size:15.36px;color:#333;transform:scaleX(1.1298);-webkit-text-stroke:0.25px #333;">50</div>
<div class="t" style="left:1280.0px;top:875.6px;font-size:15.36px;color:#333;transform:scaleX(0.9951);-webkit-text-stroke:0.25px #333;">100</div>
<div class="t" style="left:1355.0px;top:875.6px;font-size:15.36px;color:#333;transform:scaleX(0.9951);-webkit-text-stroke:0.25px #333;">150</div>
<div class="t" style="left:1430.0px;top:875.6px;font-size:15.36px;color:#333;transform:scaleX(0.9951);-webkit-text-stroke:0.25px #333;">200</div>
<div class="t" style="left:1505.0px;top:875.6px;font-size:15.36px;color:#333;transform:scaleX(0.9951);-webkit-text-stroke:0.25px #333;">250</div>
<div class="t" style="left:1580.0px;top:875.6px;font-size:15.36px;color:#333;transform:scaleX(0.9951);-webkit-text-stroke:0.25px #333;">300</div>
<div class="t" style="left:1655.0px;top:875.6px;font-size:15.36px;color:#333;transform:scaleX(0.9951);-webkit-text-stroke:0.25px #333;">350</div>
<div class="t" style="left:1730.0px;top:875.6px;font-size:15.36px;color:#333;transform:scaleX(0.9951);-webkit-text-stroke:0.25px #333;">400</div>
<div class="t" style="left:1805.0px;top:875.6px;font-size:15.36px;color:#333;transform:scaleX(0.9951);-webkit-text-stroke:0.25px #333;">450</div>
<div class="t" style="left:1880.0px;top:875.6px;font-size:15.36px;color:#333;transform:scaleX(0.9951);-webkit-text-stroke:0.25px #333;">500</div>
<div class="t" style="left:1095.5px;top:856.6px;font-size:15.36px;color:#333;transform:scaleX(0.9951);-webkit-text-stroke:0.25px #333;">0</div>
<div class="t" style="left:1364.9px;top:781.8px;font-size:15.08px;color:#333;-webkit-text-stroke:0.25px #333;">139.03928</div>
<div class="t" style="left:1257.0px;top:809.3px;font-size:15.08px;color:#333;-webkit-text-stroke:0.25px #333;">123.04636</div>
<div class="t" style="left:1369.7px;top:828.3px;font-size:15.08px;color:#333;-webkit-text-stroke:0.25px #333;">151.03876</div>
<div class="t" style="left:1413.8px;top:847.3px;font-size:15.08px;color:#333;-webkit-text-stroke:0.25px #333;">205.05170</div>
<div class="t" style="left:1539.7px;top:815.5px;font-size:15.08px;color:#333;-webkit-text-stroke:0.25px #333;">289.07002</div>
<div class="t" style="left:1641.4px;top:835.5px;font-size:15.08px;color:#333;-webkit-text-stroke:0.25px #333;">333.01827</div>
<div class="t" style="left:1720.2px;top:835.5px;font-size:15.08px;color:#333;-webkit-text-stroke:0.25px #333;">385.96923</div>
<div class="t" style="left:1795.8px;top:839.2px;font-size:15.08px;color:#333;-webkit-text-stroke:0.25px #333;">459.09328</div>
<div class="t" style="left:1868.5px;top:835.5px;font-size:15.08px;color:#333;-webkit-text-stroke:0.25px #333;">503.01059</div>
<div class="t" style="left:1455.3px;top:897.8px;font-size:15.64px;color:#444;transform:scaleX(0.9950);-webkit-text-stroke:0.25px #444;">Observed mass [m/z]</div>
<div class="t" style="left:1048px;top:856px;font-size:15.5px;color:#555;transform:rotate(-90deg) scaleX(0.95);transform-origin:0 0;">Coun</div>
<div class="a" style="left:340px;top:521px;width:26px;height:31px;background:#11363d;"></div>
<svg style="left:0;top:0" width="1" height="1"><path d="M349 531 L345.5 536.5 L349 542 M359 531 L362.5 536.5 L359 542 M351.5 536.5 H356.5" fill="none" stroke="#a9c9c9" stroke-width="1.8"/></svg>
<div class="a" style="left:911.5px;top:548.5px;width:296.5px;height:270.5px;background:#f5f7f9;"></div>
<div class="a" style="left:921px;top:774px;width:283.5px;height:40px;background:#bcd8e8;"></div>
<div class="t" style="left:922.0px;top:775.8px;font-size:11.5px;color:#333;transform:scaleX(0.9567);-webkit-text-stroke:0.25px #333;">139.03928</div>
<div class="t" style="left:922.0px;top:789.3px;font-size:11.5px;color:#333;transform:scaleX(0.9638);-webkit-text-stroke:0.25px #333;">Mass error: 0.3 mDa</div>
<div class="t" style="left:922.0px;top:801.3px;font-size:11.5px;color:#333;transform:scaleX(0.9324);-webkit-text-stroke:0.25px #333;">Formula: C7H7O3</div>
<svg style="left:0;top:0" width="1" height="1"><path d="M969.7 579.4 L990.9 565.8" stroke="#2a2a2a" stroke-width="2.4"/><path d="M990.9 565.8 L1013.6 570.3" stroke="#2a2a2a" stroke-width="2.4"/><path d="M1013.6 570.3 L1016.7 597.6" stroke="#2a2a2a" stroke-width="2.4"/><path d="M1016.7 597.6 L1000.0 612.7" stroke="#2a2a2a" stroke-width="2.4"/><path d="M1000.0 612.7 L974.2 605.2" stroke="#2a2a2a" stroke-width="2.4"/><path d="M974.2 605.2 L969.7 579.4" stroke="#2a2a2a" stroke-width="2.4"/><path d="M976.4 580.9 L990.9 571.8" stroke="#2a2a2a" stroke-width="1.8"/><path d="M1009.1 574.8 L1011.5 594.5" stroke="#2a2a2a" stroke-width="1.8"/><path d="M997.0 607.3 L978.2 600.6" stroke="#2a2a2a" stroke-width="1.8"/><path d="M1013.6 570.3 L1024.8 560.6" stroke="#2a2a2a" stroke-width="2.4"/><text x="1030.3" y="559.8" font-size="10" text-anchor="middle" fill="#cf4a4a" font-family="Liberation Sans">O</text><path d="M969.7 579.4 L951.5 574.8" stroke="#2a2a2a" stroke-width="2.4"/><text x="945.5" y="576.7" font-size="10" text-anchor="middle" fill="#cf4a4a" font-family="Liberation Sans">O</text><path d="M1016.7 597.6 L1037.9 604.2" stroke="#2a2a2a" stroke-width="2.4"/><path d="M1000.0 612.7 L1002.4 630.3" stroke="#2a2a2a" stroke-width="2.4"/><text x="1003.9" y="641.6" font-size="10" text-anchor="middle" fill="#cf4a4a" font-family="Liberation Sans">O</text><path d="M1037.9 604.2 L1045.5 627.9" stroke="#d9d9d9" stroke-width="2.4"/><path d="M1009.1 640.0 L1025.8 644.5" stroke="#d9d9d9" stroke-width="2.4"/><path d="M1025.8 644.5 L1045.5 627.9" stroke="#d9d9d9" stroke-width="2.4"/><path d="M1033.3 620.3 L1051.5 614.2" stroke="#cf4a4a" stroke-width="3"/><path d="M1010.6 647.6 L1016.7 633.9" stroke="#cf4a4a" stroke-width="3"/><path d="M1025.8 644.5 L1029.7 667.3 L1033.9 667.3Z" fill="#333"/><path d="M1031.8 667.3 L1056.1 680.9" stroke="#d9d9d9" stroke-width="2"/><path d="M1056.1 680.9 L1057.6 703.6" stroke="#d9d9d9" stroke-width="2"/><path d="M1057.6 703.6 L1037.9 717.3" stroke="#d9d9d9" stroke-width="2"/><path d="M1037.9 717.3 L1015.2 705.2" stroke="#d9d9d9" stroke-width="2"/><path d="M1015.2 705.2 L1014.5 682.4" stroke="#d9d9d9" stroke-width="2"/><path d="M1014.5 682.4 L1031.8 667.3" stroke="#d9d9d9" stroke-width="2"/><path d="M1020.6 685.5 L1020.6 702.1" stroke="#d9d9d9" stroke-width="1.6"/><path d="M1051.5 683.9 L1053.0 700.6" stroke="#d9d9d9" stroke-width="1.6"/><path d="M1057.6 703.6 L1077.3 706.7" stroke="#d9d9d9" stroke-width="2"/><text x="1083.3" y="711.3" font-size="10" text-anchor="middle" fill="#d9d9d9" font-family="Liberation Sans">O</text><path d="M1037.9 717.3 L1042.4 733.9" stroke="#d9d9d9" stroke-width="2"/><text x="1047.0" y="744.6" font-size="10" text-anchor="middle" fill="#d9d9d9" font-family="Liberation Sans">O</text><path d="M1015.2 705.2 L1004.5 718.8" stroke="#d9d9d9" stroke-width="2"/><text x="1000.0" y="728.2" font-size="10" text-anchor="middle" fill="#d9d9d9" font-family="Liberation Sans">O</text><path d="M1045.5 627.9 L1063.6 633.9" stroke="#d9d9d9" stroke-width="2"/><text x="1067.6" y="640.4" font-size="10" text-anchor="middle" fill="#d9d9d9" font-family="Liberation Sans">O</text><path d="M1071.2 630.9 L1084.8 620.3" stroke="#d9d9d9" stroke-width="2"/><path d="M1084.8 620.3 L1081.8 602.1" stroke="#d9d9d9" stroke-width="2"/><path d="M1078.8 620.3 L1076.4 603.6" stroke="#d9d9d9" stroke-width="1.6"/><text x="1081.2" y="600.1" font-size="10" text-anchor="middle" fill="#d9d9d9" font-family="Liberation Sans">O</text><path d="M1084.8 620.3 L1109.1 626.4" stroke="#d9d9d9" stroke-width="2"/><path d="M1109.1 626.4 L1130.3 612.7" stroke="#d9d9d9" stroke-width="2"/><path d="M1130.3 612.7 L1151.5 620.3" stroke="#d9d9d9" stroke-width="2"/><path d="M1151.5 620.3 L1154.5 644.5" stroke="#d9d9d9" stroke-width="2"/><path d="M1154.5 644.5 L1134.8 658.2" stroke="#d9d9d9" stroke-width="2"/><path d="M1134.8 658.2 L1113.6 649.1" stroke="#d9d9d9" stroke-width="2"/><path d="M1113.6 649.1 L1109.1 626.4" stroke="#d9d9d9" stroke-width="2"/><path d="M1115.8 627.9 L1128.8 619.4" stroke="#d9d9d9" stroke-width="1.6"/><path d="M1147.0 624.8 L1148.5 641.5" stroke="#d9d9d9" stroke-width="1.6"/><path d="M1131.8 651.5 L1116.7 644.5" stroke="#d9d9d9" stroke-width="1.6"/><path d="M1151.5 620.3 L1163.6 606.7" stroke="#d9d9d9" stroke-width="2"/><text x="1169.1" y="606.1" font-size="10" text-anchor="middle" fill="#d9d9d9" font-family="Liberation Sans">O</text><path d="M1154.5 644.5 L1172.7 647.6" stroke="#d9d9d9" stroke-width="2"/><text x="1178.2" y="653.1" font-size="10" text-anchor="middle" fill="#d9d9d9" font-family="Liberation Sans">O</text><path d="M1134.8 658.2 L1139.4 674.8" stroke="#d9d9d9" stroke-width="2"/><text x="1142.4" y="686.4" font-size="10" text-anchor="middle" fill="#d9d9d9" font-family="Liberation Sans">O</text></svg>
<svg style="left:0;top:0" width="1" height="1"><path d="M1196.0 577.5 L1204.3 585.4 C1206.3 584.8 1211.7 582.8 1216.3 582.0 C1220.9 581.2 1226.8 580.6 1232.0 580.6 C1237.2 580.6 1242.5 581.2 1247.7 582.2 C1252.9 583.2 1258.2 584.8 1263.4 586.3 C1268.6 587.8 1272.9 589.0 1279.0 591.5 C1285.1 594.0 1292.2 596.6 1300.0 601.0 C1307.8 605.4 1319.1 612.8 1326.1 617.8 C1333.1 622.8 1336.6 626.2 1341.8 631.3 C1347.0 636.3 1352.6 642.5 1357.5 648.1 C1362.4 653.7 1366.8 659.1 1371.1 664.8 C1375.4 670.5 1379.9 676.8 1383.6 682.5 C1387.2 688.2 1390.5 694.4 1393.0 699.3 C1395.5 704.2 1397.0 707.0 1398.7 712.0 C1400.4 717.0 1402.6 723.0 1403.4 729.0 C1404.2 735.0 1404.1 741.6 1403.8 747.9 C1403.5 754.2 1402.0 763.6 1401.6 766.7 L1390.3 784.6 L1374.3 771.4 C1376.0 769.0 1382.3 762.5 1384.6 757.3 C1386.9 752.1 1387.7 746.3 1388.0 740.4 C1388.3 734.5 1387.4 728.3 1386.6 721.6 C1385.8 714.9 1384.4 705.8 1383.0 700.0 C1381.6 694.2 1380.9 692.1 1378.4 686.7 C1375.9 681.4 1371.7 673.6 1367.9 667.9 C1364.1 662.1 1359.8 657.6 1355.4 652.2 C1351.1 646.8 1346.7 640.5 1341.8 635.5 C1336.9 630.5 1331.3 625.9 1326.1 621.9 C1320.9 617.9 1315.6 614.6 1310.4 611.5 C1305.2 608.4 1299.9 605.7 1294.7 603.3 C1289.5 600.9 1284.2 598.7 1279.0 597.0 C1273.8 595.3 1268.6 593.9 1263.4 593.2 C1258.2 592.5 1252.9 592.4 1247.7 592.6 C1242.5 592.8 1236.5 593.5 1232.0 594.6 C1227.5 595.7 1222.4 598.3 1220.5 599.0 L1227.8 606.3 L1194.4 604.2 Z" fill="#3361ae" stroke="#244a88" stroke-width="1.2" stroke-linejoin="round"/></svg></body></html>
